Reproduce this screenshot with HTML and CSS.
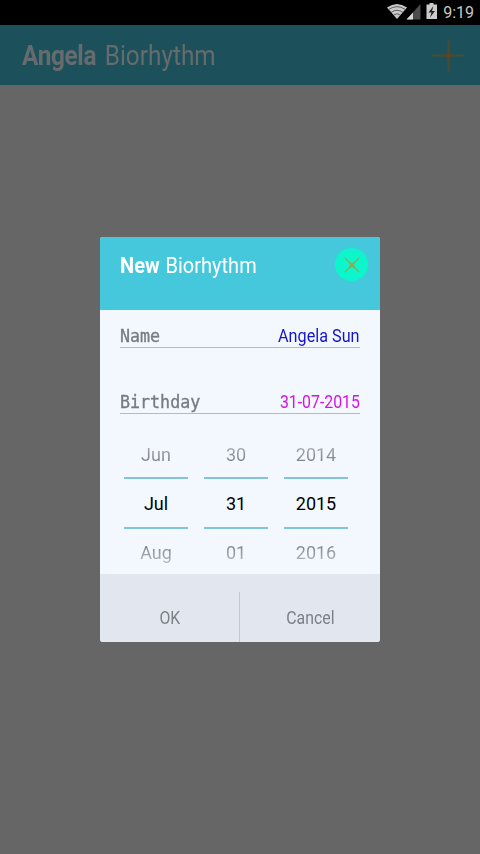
FILE: index.html
```html
<!DOCTYPE html>
<html lang="en">
<head>
<meta charset="utf-8">
<title>Angela Biorhythm</title>
<link rel="stylesheet" href="styles.css">
</head>
<body>
<div class="status">
  <svg class="status-icons" width="52" height="19" viewBox="0 0 52 19">
    <path d="M0 5.500Q10 -1.500 20 5.500L10 17Z" fill="#c9c9c9"/>
    <path d="M1.500 7.500Q10 1.800 18.500 7.500M4 10.500Q10 6 16 10.500M6.500 13Q10 10.500 13.500 13" fill="none" stroke="#444" stroke-width=".8"/>
    <path d="M33.500 2V17.500H19.500Z" fill="#4c4c4c"/>
    <path d="M26 10.500V17.500H19.500Z" fill="#d8d8d8"/>
    <path d="M42.500 2.500V1h4v1.500h3.500v14.500H39.500v-14.500Z" fill="#ccc"/>
    <path d="M46.500 4l-5 6.500h3l-1.500 5 5-6.500h-3Z" fill="#222"/>
  </svg>
  <span class="clock">9:19</span>
</div>
<header class="appbar">
  <h1 class="app-title"><b>Angela</b> Biorhythm</h1>
  <svg class="plus" width="34" height="34" viewBox="0 0 34 34"><path d="M17.500 1v32M1 16.500h32" stroke="#4c4a30" stroke-width="2"/><path d="M15 16.500h5" stroke="#65431f" stroke-width="3"/></svg>
</header>
<main class="stage">
  <section class="dialog">
    <header class="dialog-head">
      <h2 class="dialog-title"><b>New</b> Biorhythm</h2>
      <span class="close"><svg width="16" height="16" viewBox="0 0 16 16"><path d="M1 1l14 14M15 1L1 15" stroke="#72b868" stroke-width="1.500"/><path d="M5.500 5.500l5 5M10.500 5.500l-5 5" stroke="#a89a42" stroke-width="1.500"/></svg></span>
    </header>
    <div class="form">
      <div class="field"><span class="label">Name</span><span class="value name">Angela Sun</span></div>
      <div class="field"><span class="label">Birthday</span><span class="value date">31-07-2015</span></div>
      <div class="picker">
        <div class="wheel"><span class="before">Jun</span><span class="current">Jul</span><span class="after">Aug</span></div>
        <div class="wheel"><span class="before">30</span><span class="current">31</span><span class="after">01</span></div>
        <div class="wheel"><span class="before">2014</span><span class="current">2015</span><span class="after">2016</span></div>
      </div>
    </div>
    <footer class="actions"><div class="action"><span class="narrow">OK</span></div><div class="action cancel"><span class="narrow">Cancel</span></div></footer>
  </section>
</main>
</body>
</html>
```
FILE: styles.css
```css
* { box-sizing: border-box; }
body { margin: 0; width: 480px; height: 854px; overflow: hidden; background: #666; font-family: Roboto, "Liberation Sans", sans-serif; }
h1, h2 { margin: 0; font-weight: 400; white-space: nowrap; transform-origin: left center; }
.status { height: 25px; background: #000; display: flex; justify-content: flex-end; align-items: flex-start; padding: 2px 6px 0 0; }
.status-icons { margin-right: 4px; }
.clock { color: #c8c8c8; font-size: 16px; line-height: 21px; }
.appbar { height: 60px; background: #1c515b; display: flex; align-items: center; justify-content: space-between; padding: 2px 15px 0 22px; }
.app-title { color: #666b6d; font-size: 28px; line-height: 36px; word-spacing: 3px; transform: scaleX(.87); }
.app-title b { letter-spacing: -.4px; }
.plus { display: block; }
.stage { padding: 152px 100px 0; }
.dialog { width: 280px; height: 405px; border-radius: 3px; overflow: hidden; background: #f3f8ff; }
.dialog-head { height: 73px; background: #45c8dc; display: flex; justify-content: space-between; padding: 11px 12px 0 20px; }
.dialog-title { color: #fff; font-size: 22px; line-height: 36px; word-spacing: 1px; transform: scaleX(.91); }
.close { width: 33px; height: 33px; border-radius: 50%; background: #0df5ca; display: flex; align-items: center; justify-content: center; }
.form { height: 264px; padding: 14px 20px 0; }
.field { height: 24px; border-bottom: 1px solid #b6bac0; display: flex; justify-content: space-between; line-height: 24px; margin-bottom: 42px; }
.label { font-family: "DejaVu Sans Mono", monospace; font-size: 17px; color: #777b83; -webkit-text-stroke: .35px #777b83; transform: scaleX(.98); transform-origin: left center; }
.value { font-size: 18px; transform: scaleX(.9); transform-origin: right center; }
.name { color: #1414cc; }
.date { color: #d414e4; transform: scaleX(.88); }
.picker { display: flex; gap: 16px; padding-left: 4px; margin-top: -18px; }
.wheel { width: 64px; text-align: center; font-size: 18px; }
.wheel span { display: block; height: 48px; line-height: 48px; }
.wheel .before { height: 49px; line-height: 54px; margin-top: -10px; }
.wheel .current { height: 52px; line-height: 50px; border: solid #80c3dd; border-width: 2px 0; color: #000; }
.before, .after { color: transparent; background-clip: text; -webkit-background-clip: text; }
.before { background-image: linear-gradient(#a9adb3 38%, #7f8389 68%); }
.after { background-image: linear-gradient(#7f8389 34%, #b2b6bc 68%); }
.actions { height: 68px; background: #e2e6ee; display: flex; align-items: flex-end; color: #7c8087; font-size: 18px; }
.action { width: 50%; height: 50px; line-height: 52px; text-align: center; }
.action:first-child { width: 139px; }
.cancel { width: 141px; border-left: 1px solid #c4c8d0; }
.narrow { display: inline-block; transform: scaleX(.88); }
```
